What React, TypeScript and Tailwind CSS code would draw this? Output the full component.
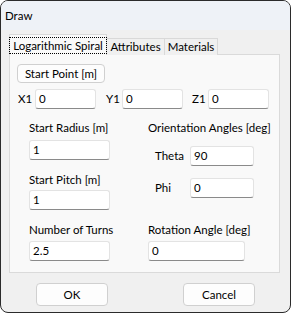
import React from "react";

function Field({ value, className }: { value: string; className?: string }) {
  return (
    <div
      className={`flex h-[20px] items-center rounded-[3px] border border-[#e3e3e3] border-b-[#8a8a8a] bg-white pl-[3px] text-black ${className ?? ""}`}
    >
      {value}
    </div>
  );
}

function Btn({ label, className }: { label: string; className?: string }) {
  return (
    <div
      className={`flex items-center justify-center rounded-[4px] border border-[#d0d0d0] bg-[#fdfdfd] text-black ${className ?? ""}`}
    >
      {label}
    </div>
  );
}

export default function App() {
  return (
    <div className="flex h-[313px] w-[291px] flex-col overflow-hidden whitespace-nowrap rounded-[8px] border border-[#2b2b2b] bg-[#f0f0f0] font-['Lato',sans-serif] text-[11.5px] leading-[16px] text-black">
      {/* title bar */}
      <div className="flex h-[29px] items-center bg-[#eef2f7] pl-[4px]">Draw</div>

      <div className="flex flex-col px-[8px]">
        {/* tabs */}
        <div className="relative z-10 mt-[4px] -mb-px flex h-[21px] items-end">
          <div className="flex h-[21px] w-[98px] items-center justify-center border border-b-0 border-[#d9d9d9] bg-[#f9f9f9]">
            <span className="border border-dotted border-black px-[3px] leading-[15px]">Logarithmic Spiral</span>
          </div>
          <div className="flex h-[17px] w-[58px] items-center justify-center border border-b-0 border-l-0 border-[#d9d9d9] bg-[#f0f0f0]">
            Attributes
          </div>
          <div className="flex h-[17px] w-[53px] items-center justify-center border border-b-0 border-l-0 border-[#d9d9d9] bg-[#f0f0f0]">
            Materials
          </div>
        </div>

        {/* panel */}
        <div className="flex h-[219px] w-[271px] flex-col border border-[#dadada] bg-[#f9f9f9]">
          <Btn label="Start Point [m]" className="ml-[7px] mt-[9px] h-[19px] w-[88px]" />

          <div className="mt-[5px] flex h-[21px] items-center">
            <span className="ml-[8px] w-[17px]">X1</span>
            <Field value="0" className="w-[61px]" />
            <span className="ml-[10px] w-[16px]">Y1</span>
            <Field value="0" className="w-[61px]" />
            <span className="ml-[9px] w-[16px]">Z1</span>
            <Field value="0" className="w-[61px]" />
          </div>

          <div className="mt-[11px] flex">
            <div className="ml-[19px] flex w-[119px] flex-col">
              <span>Start Radius [m]</span>
              <Field value="1" className="mt-[4px] w-[81px]" />
              <span className="mt-[12px]">Start Pitch [m]</span>
              <Field value="1" className="mt-[2px] w-[81px]" />
              <span className="mt-[12px]">Number of Turns</span>
              <Field value="2.5" className="mt-[3px] w-[81px]" />
            </div>
            <div className="flex flex-col">
              <span>Orientation Angles [deg]</span>
              <div className="mt-[10px] flex items-center">
                <span className="ml-[7px] w-[35px]">Theta</span>
                <Field value="90" className="w-[64px]" />
              </div>
              <div className="mt-[12px] flex items-center">
                <span className="ml-[7px] w-[35px]">Phi</span>
                <Field value="0" className="w-[64px]" />
              </div>
              <span className="mt-[24px]">Rotation Angle [deg]</span>
              <Field value="0" className="mt-[3px] w-[97px]" />
            </div>
          </div>
        </div>

        {/* buttons */}
        <div className="mt-[10px] flex">
          <Btn label="OK" className="ml-[27px] h-[23px] w-[72px]" />
          <Btn label="Cancel" className="ml-[75px] h-[23px] w-[72px]" />
        </div>
      </div>
    </div>
  );
}
